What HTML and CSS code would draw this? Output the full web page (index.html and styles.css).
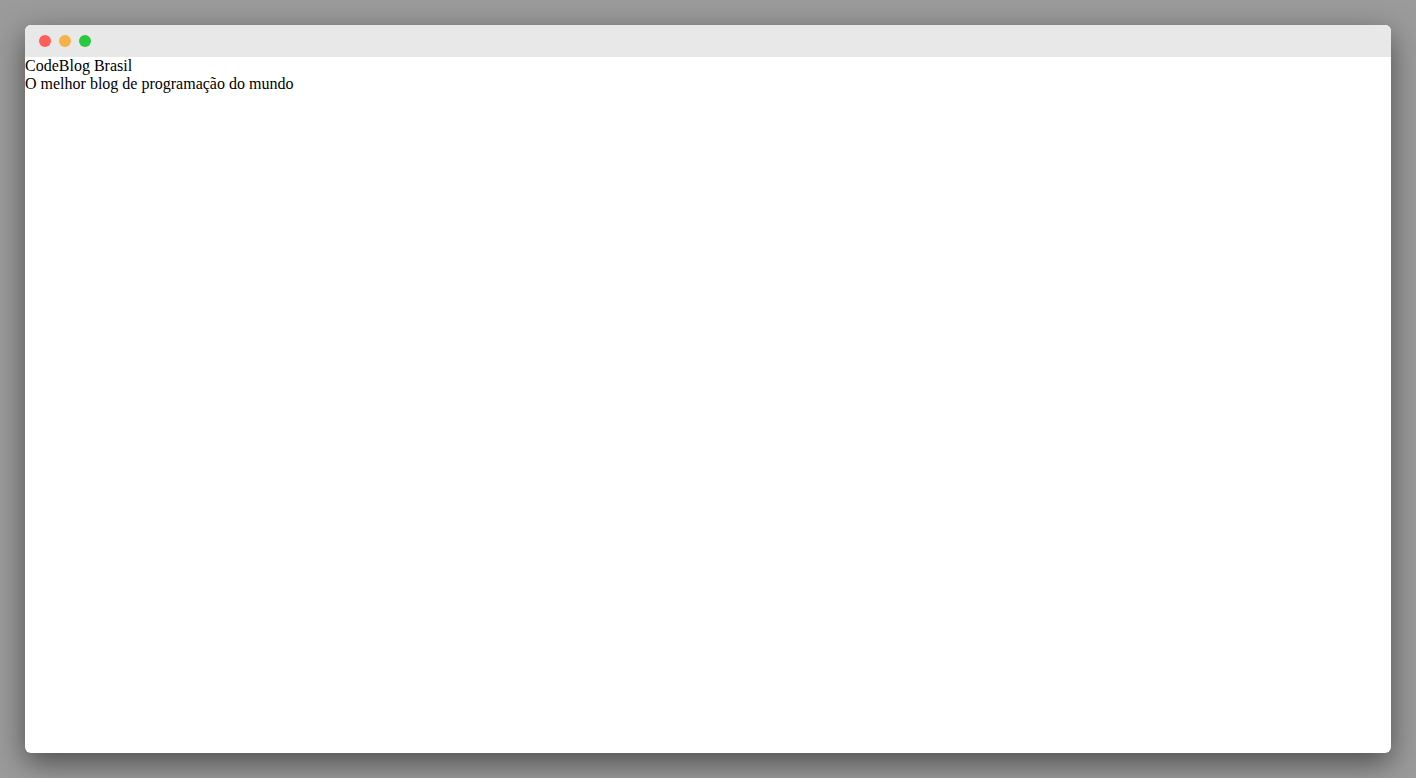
FILE: index.html
```html
<!DOCTYPE html>
<html>
<head>
<meta charset="utf-8">
<link rel="stylesheet" href="styles.css">
</head>
<body>
<div class="window">
  <div class="titlebar">
    <span class="dot red"></span>
    <span class="dot yellow"></span>
    <span class="dot green"></span>
  </div>
  <div class="content">
    <div>CodeBlog Brasil</div>
    <div>O melhor blog de programação do mundo</div>
  </div>
</div>
</body>
</html>
```

FILE: styles.css
```css
html, body {
  margin: 0;
  height: 100%;
}
body {
  background: #9b9b9b;
  padding: 25px;
  box-sizing: border-box;
  font-family: "Liberation Serif", "Times New Roman", serif;
  font-size: 16px;
  color: #000;
}
.window {
  height: 100%;
  background: #fff;
  border-radius: 6px;
  overflow: hidden;
  box-shadow: 0 10px 30px rgba(0, 0, 0, 0.5);
  display: flex;
  flex-direction: column;
}
.titlebar {
  height: 32px;
  background: #e8e8e8;
  display: flex;
  align-items: center;
  gap: 8px;
  padding-left: 14px;
  flex-shrink: 0;
}
.dot {
  width: 12px;
  height: 12px;
  border-radius: 50%;
}
.red { background: #ff5f57; }
.yellow { background: #f7b14a; }
.green { background: #28c840; }
.content {
  line-height: 18px;
}
```
